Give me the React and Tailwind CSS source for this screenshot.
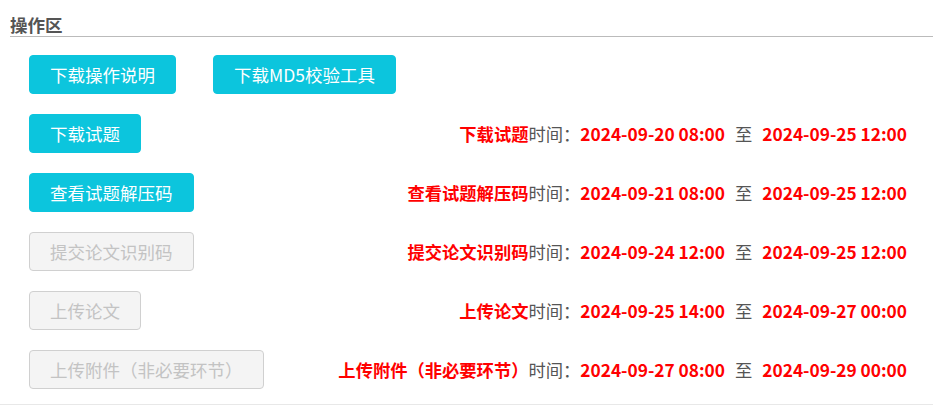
const rows = [
  { label: '下载试题', name: '下载试题', start: '2024-09-20 08:00', end: '2024-09-25 12:00', enabled: true },
  { label: '查看试题解压码', name: '查看试题解压码', start: '2024-09-21 08:00', end: '2024-09-25 12:00', enabled: true },
  { label: '提交论文识别码', name: '提交论文识别码', start: '2024-09-24 12:00', end: '2024-09-25 12:00', enabled: false },
  { label: '上传论文', name: '上传论文', start: '2024-09-25 14:00', end: '2024-09-27 00:00', enabled: false },
  { label: '上传附件（非必要环节）', name: '上传附件（非必要环节）', start: '2024-09-27 08:00', end: '2024-09-29 00:00', enabled: false },
];

function Btn({ children, enabled = true }) {
  return (
    <button
      className={`h-[39px] px-5 rounded border text-[17.5px] leading-none whitespace-nowrap ${
        enabled
          ? 'bg-[#0cc5dd] border-[#0cc5dd] text-white'
          : 'bg-[#f4f4f4] text-[#c3c3c3] border-[#d0d0d0]'
      }`}
    >
      {children}
    </button>
  );
}

export default function App() {
  return (
    <div className="w-[933px] h-[416px] bg-white font-['Noto_Sans_CJK_SC','Microsoft_YaHei',sans-serif]">
      <div className="pt-[14px] pl-[10px]">
        <h2 className="text-[17.5px] font-bold text-[#555] leading-[21px] border-b border-[#bbb] pb-[1px]">
          操作区
        </h2>
      </div>

      <div className="pl-[29px] pr-[26px] pt-[18px] pb-[15px] border-b border-[#e8e8e8]">
        <div className="flex gap-[37px] mb-5">
          <Btn>下载操作说明</Btn>
          <Btn>下载MD5校验工具</Btn>
        </div>

        <div className="flex flex-col gap-5">
          {rows.map(row => (
            <div key={row.label} className="flex items-center justify-between">
              <Btn enabled={row.enabled}>{row.label}</Btn>
              <div className="text-[17.3px] whitespace-nowrap">
                <span className="font-bold text-[#ff0000]">{row.name}</span>
                <span className="text-[#555]">时间：</span>
                <span className="font-bold text-[#ff0000]">{row.start}</span>
                <span className="text-[#555] mx-[10px]">至</span>
                <span className="font-bold text-[#ff0000]">{row.end}</span>
              </div>
            </div>
          ))}
        </div>
      </div>
    </div>
  );
}
